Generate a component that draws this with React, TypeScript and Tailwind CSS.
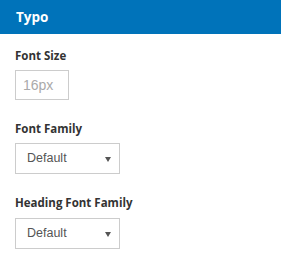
export default function App() {
  const label = "text-[11.5px] font-bold text-[#333] leading-[16px]";
  const sel =
    "relative w-[105px] h-[31px] border border-[#ccc] bg-white flex items-center pl-[11px] text-[12.5px] text-[#555]";
  const arrow =
    "absolute right-[8px] top-[13px] w-0 h-0 border-l-[3px] border-r-[3px] border-t-[5px] border-l-transparent border-r-transparent border-t-[#555]";
  const arial = { fontFamily: "'Liberation Sans', Arial, sans-serif" };
  return (
    <div className="w-[281px] h-[275px] bg-white" style={{ fontFamily: "'Open Sans', sans-serif" }}>
      <div className="h-[34px] bg-[#0073ba] flex items-center pl-[16px]">
        <span className="text-white font-bold text-[13.5px]">Typo</span>
      </div>
      <div className="pl-[15px] pt-[14px] flex flex-col">
        <div className={label}>Font Size</div>
        <div
          className="mt-[6px] w-[54px] h-[30px] border border-[#ccc] flex items-center pl-[7px] text-[14px] text-[#aaa]"
          style={arial}
        >
          16px
        </div>
        <div className={label + " mt-[21px]"}>Font Family</div>
        <div className={sel + " mt-[6px]"} style={arial}>
          Default
          <span className={arrow} />
        </div>
        <div className={label + " mt-[21px]"}>Heading Font Family</div>
        <div className={sel + " mt-[7px]"} style={arial}>
          Default
          <span className={arrow} />
        </div>
      </div>
    </div>
  );
}
